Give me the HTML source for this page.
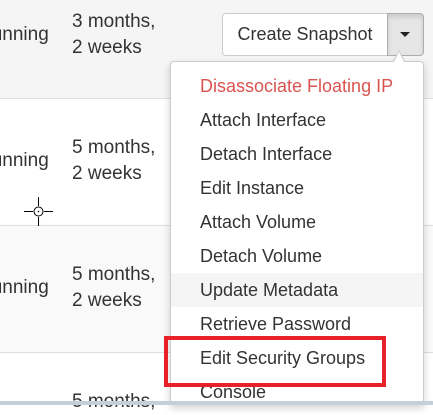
<!DOCTYPE html>
<html><head><style>
*{margin:0;padding:0;box-sizing:border-box}
body{width:433px;height:405px;overflow:hidden;position:relative;font-family:"Liberation Sans",Arial,sans-serif;font-size:18px;color:#333;background:#fff}
.row{position:absolute;left:0;width:433px;border-bottom:1px solid #ddd}
.t{position:absolute;white-space:nowrap;line-height:26px}
.m{font-size:19px}
.clip{position:absolute;left:0;top:0;width:60px;height:405px;overflow:hidden}
.menu{position:absolute;left:170px;top:61px;width:254px;height:344px;background:#fff;border:1px solid #ccc;border-bottom:none;border-radius:4px 4px 0 0;box-shadow:0 3px 8px rgba(0,0,0,.18)}
.item{position:absolute;left:0;width:252px;height:34px;line-height:34px;padding-left:29px;color:#333}
</style></head><body>
<div class="row" style="top:0;height:99px;background:#f5f5f5"></div>
<div class="row" style="top:99px;height:127px;background:#fff"></div>
<div class="row" style="top:226px;height:127px;background:#f9f9f9"></div>
<div class="row" style="top:353px;height:52px;background:#fff;border:none"></div>

<div class="clip">
<div class="t m" style="left:-22px;top:22px">Running</div>
<div class="t m" style="left:-22px;top:148px">Running</div>
<div class="t m" style="left:-22px;top:275px">Running</div>
</div>
<div class="t m" style="left:72px;top:9px">3 months,<br>2 weeks</div>
<div class="t m" style="left:72px;top:135px">5 months,<br>2 weeks</div>
<div class="t m" style="left:72px;top:262px">5 months,<br>2 weeks</div>
<div class="t m" style="left:72px;top:389px">5 months,</div>

<svg style="position:absolute;left:24px;top:197px" width="29" height="29"><path d="M14.5 0v9M14.5 20v9M0 14.5h9M20 14.5h9" stroke="#000" stroke-width="1"/><circle cx="14.5" cy="14.5" r="4.5" fill="none" stroke="#000"/><circle cx="14.5" cy="14.5" r=".8" fill="#000"/></svg>

<div style="position:absolute;left:222px;top:13px;width:166px;height:43px;border:1px solid #ccc;border-radius:4px 0 0 4px;background:#fff;line-height:41px;text-align:center">Create Snapshot</div>
<div style="position:absolute;left:387px;top:13px;width:37px;height:43px;border:1px solid #adadad;border-radius:0 4px 4px 0;background:#e6e6e6;box-shadow:inset 0 3px 5px rgba(0,0,0,.125)"><div style="position:absolute;left:12px;top:18px;border-left:5px solid transparent;border-right:5px solid transparent;border-top:5px solid #222"></div></div>

<div class="menu">
<div class="item" style="top:7px;color:#d9534f">Disassociate Floating IP</div>
<div class="item" style="top:41px">Attach Interface</div>
<div class="item" style="top:75px">Detach Interface</div>
<div class="item" style="top:109px">Edit Instance</div>
<div class="item" style="top:143px">Attach Volume</div>
<div class="item" style="top:177px">Detach Volume</div>
<div class="item" style="top:211px;background:#f5f5f5">Update Metadata</div>
<div class="item" style="top:245px">Retrieve Password</div>
<div class="item" style="top:279px">Edit Security Groups</div>
<div class="item" style="top:313px">Console</div>
</div>
<div style="position:absolute;left:393px;top:50px;width:0;height:0;border-left:6px solid transparent;border-right:6px solid transparent;border-bottom:11px solid #ccc"></div>
<div style="position:absolute;left:394px;top:52px;width:0;height:0;border-left:5px solid transparent;border-right:5px solid transparent;border-bottom:10px solid #fff"></div>

<div style="position:absolute;left:164px;top:336px;width:222px;height:51px;border:4px solid #e8202a"></div>
<div style="position:absolute;left:0;top:401px;width:433px;height:4px;background:#c5cedb"></div>
</body></html>
